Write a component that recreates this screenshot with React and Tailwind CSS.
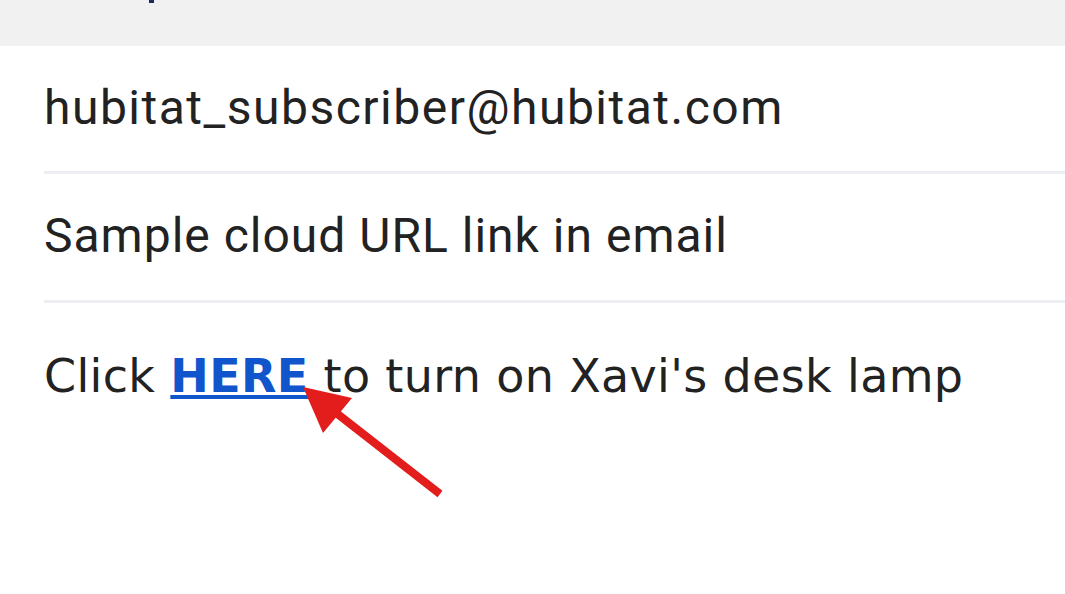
export default function App() {
  return (
    <div className="relative w-[1065px] h-[594px] bg-white overflow-hidden">
      {/* header strip (heading cut off above) */}
      <div className="h-[46px] bg-[#f1f1f1]">
        <div className="ml-[149px] w-[5px] h-[3px] bg-[#1a2a5a]" />
      </div>

      <div className="pl-[44px] text-[#222222]">
        <div className="h-[128px] flex items-center border-b-[3px] border-[#eceef1]">
          <span className="text-[48px] font-['Roboto',sans-serif] tracking-[1.5px] pb-[2px]">hubitat_subscriber@hubitat.com</span>
        </div>
        <div className="h-[129px] flex items-center border-b-[3px] border-[#eceef1]">
          <span className="text-[48px] font-['Roboto',sans-serif] tracking-[1px] pb-[2px]">Sample cloud URL link in email</span>
        </div>
        <div className="h-[146px] flex items-center">
          <p className="text-[46px] font-['DejaVu_Sans',sans-serif] tracking-[0.35px]">
            Click{" "}
            <a href="#" className="text-[#1155cc] font-bold underline decoration-[4px] underline-offset-[3px]">HERE</a>
            {" "}to turn on Xavi's desk lamp
          </p>
        </div>
      </div>

      {/* red arrow annotation */}
      <svg className="absolute left-0 top-0" width="1065" height="594" viewBox="0 0 1065 594">
        <line x1="440" y1="494" x2="335" y2="412" stroke="#e31c1c" strokeWidth="8" />
        <polygon points="303,387 352,398 323,433" fill="#e31c1c" />
      </svg>
    </div>
  );
}
